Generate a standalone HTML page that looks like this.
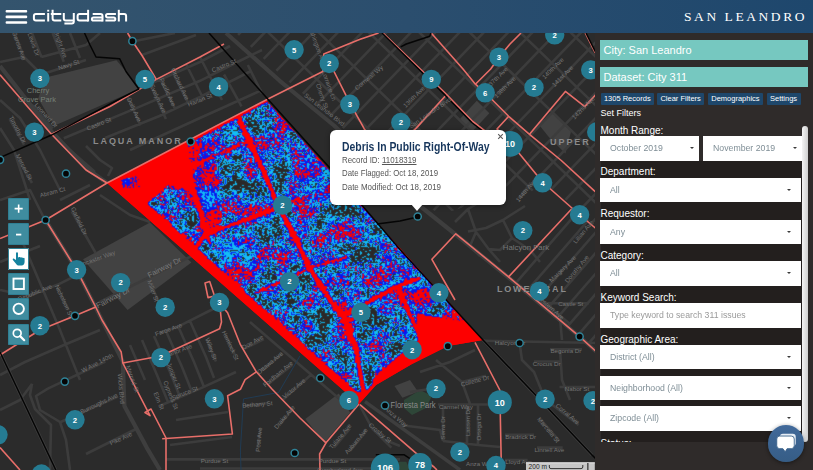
<!DOCTYPE html>
<html><head><meta charset="utf-8"><title>citydash</title>
<style>

html,body{margin:0;padding:0;}
body{width:813px;height:470px;overflow:hidden;background:#2b2b2b;position:relative;font-family:"Liberation Sans",sans-serif;}
#map{position:absolute;left:0;top:0;width:813px;height:470px;}
#hdr{position:absolute;left:0;top:0;width:813px;height:33px;background:linear-gradient(90deg,#34546d 0%,#2b4e6e 50%,#1e476d 100%);}
#brand{position:absolute;left:684px;top:9.3px;color:#fff;font-family:"Liberation Serif",serif;font-size:13.5px;letter-spacing:2.56px;line-height:15px;white-space:nowrap;}
#side{position:absolute;left:595px;top:33px;width:218px;height:437px;background:#2f2b2a;}
.bar{position:absolute;left:5px;width:208px;height:20px;background:#76c8c0;color:#fff;font-size:11px;line-height:20px;text-indent:3.5px;white-space:nowrap;}
.btn{position:absolute;top:60px;height:11.6px;background:#1e476b;color:#fff;font-size:7.5px;line-height:11.6px;text-align:center;white-space:nowrap;border-radius:1px;}
.lbl{position:absolute;left:5.5px;color:#fff;font-size:10px;line-height:10px;white-space:nowrap;}
.sel{position:absolute;left:5.2px;width:201.3px;height:24.7px;background:#fff;color:#7f8e96;font-size:9.1px;line-height:24.7px;text-indent:9.5px;white-space:nowrap;}
.sel i{position:absolute;right:10px;top:11.2px;width:0;height:0;border-left:2.3px solid transparent;border-right:2.3px solid transparent;border-top:2.8px solid #3a3a3a;}
.sel.m i{right:5.2px;}
.sx{display:inline-block;transform:scaleX(0.96);transform-origin:0 50%;text-indent:0;}
.gap{position:absolute;left:5.5px;width:201px;background:#231f1e;}
#pop{position:absolute;left:330px;top:130px;width:175.5px;height:74.5px;background:#fff;border-radius:6px;box-shadow:0 1px 5px rgba(0,0,0,.4);}
#pop:after{content:"";position:absolute;left:81px;top:74px;border-left:6.5px solid transparent;border-right:6.5px solid transparent;border-top:7.5px solid #fff;}
#pop .t{position:absolute;left:12px;top:11px;font-weight:bold;font-size:12px;line-height:12px;color:#17365c;white-space:nowrap;}
#pop .r{position:absolute;left:12px;font-size:8.4px;line-height:9px;color:#555;white-space:nowrap;}
.tb{position:absolute;left:7.7px;width:21.4px;height:21.6px;background:#3f8c9f;border-radius:1.5px;}

</style></head><body>
<svg id="map" width="813" height="470" viewBox="0 0 813 470">
<defs>
<clipPath id="hp"><polygon points="107.0,183.0 266.0,100.0 483.0,340.0 448.0,346.0 412.0,364.0 376.0,385.0 359.0,404.0"/></clipPath>
<clipPath id="rA"><polygon points="0,33 209,33 266,100 107,183 86,170 0,75"/></clipPath>
<clipPath id="rB"><polygon points="236,33 600,33 600,228 575,207 543,183 520,200 500,180 470,205 440,215 420,200 334,120 282,76"/></clipPath>
<clipPath id="rB2"><polygon points="508,277 573,207 600,228 600,352 580,337"/></clipPath>
<clipPath id="rC"><polygon points="0,75 107,183 359,404 326,443 320,470 0,470"/></clipPath>
<clipPath id="rD"><polygon points="359,404 376,385 412,364 448,346 483,340 600,463 600,470 320,470 326,443"/></clipPath>
<filter id="heat" filterUnits="userSpaceOnUse" x="100" y="95" width="390" height="315" color-interpolation-filters="sRGB">
  <feGaussianBlur in="SourceGraphic" stdDeviation="1.5" result="m"/>
  <feTurbulence type="fractalNoise" baseFrequency="0.045" numOctaves="3" seed="11" result="n1"/>
  <feColorMatrix in="n1" type="matrix" values="2.2 0 0 0 -0.6  2.2 0 0 0 -0.6  2.2 0 0 0 -0.6  0 0 0 0 1" result="g1"/>
  <feTurbulence type="fractalNoise" baseFrequency="0.4 0.5" numOctaves="1" seed="3" result="n2"/>
  <feColorMatrix in="n2" type="matrix" values="2.4 0 0 0 -0.7  2.4 0 0 0 -0.7  2.4 0 0 0 -0.7  0 0 0 0 1" result="g2"/>
  <feComposite in="g1" in2="g2" operator="arithmetic" k1="0" k2="0.5" k3="0.5" k4="0" result="s"/>
  <feComposite in="s" in2="m" operator="arithmetic" k1="1" k2="0" k3="0" k4="0" result="v"/>
  <feComponentTransfer in="v" result="c">
    <feFuncR type="discrete" tableValues="0.996 0.996 0.996 0.996 0.996 0.996 0.996 0.996 0.996 0.996 0.996 0.031 0.031 0.031 0.031 0.031 0.031 0.031 0.078 0.078 0.078 0.078 0.078 0.078 0.078 0.165 0.165 0.165 0.165 0.165 0.165 0.165 0.165 0.165 0.165 0.165 0.165 0.165 0.165 0.165"/>
    <feFuncG type="discrete" tableValues="0.000 0.000 0.000 0.000 0.000 0.000 0.000 0.000 0.000 0.000 0.000 0.094 0.094 0.094 0.094 0.094 0.094 0.094 0.745 0.745 0.745 0.745 0.745 0.745 0.745 0.157 0.157 0.157 0.157 0.157 0.157 0.157 0.157 0.157 0.157 0.157 0.157 0.157 0.157 0.157"/>
    <feFuncB type="discrete" tableValues="0.000 0.000 0.000 0.000 0.000 0.000 0.000 0.000 0.000 0.000 0.000 0.941 0.941 0.941 0.941 0.941 0.941 0.941 0.961 0.961 0.961 0.961 0.961 0.961 0.961 0.157 0.157 0.157 0.157 0.157 0.157 0.157 0.157 0.157 0.157 0.157 0.157 0.157 0.157 0.157"/>
  </feComponentTransfer>
  <feConvolveMatrix in="c" order="3" kernelMatrix="0.035 0.09 0.035 0.09 0.5 0.09 0.035 0.09 0.035" divisor="1" edgeMode="duplicate" preserveAlpha="true"/>
</filter>
</defs>
<rect x="0" y="0" width="813" height="470" fill="#2b2b2b"/>
<polygon points="44.7,77.8 116.4,60.3 126.0,71.5 138.8,89.0 54.2,125.7 38.3,98.6" fill="#424242"/>
<polygon points="305.3,418.9 338.8,393.4 350.0,412.5 324.4,442.8" fill="#424242"/>
<polygon points="83.0,259.3 150.0,222.6 191.4,262.5 127.6,310.0" fill="#424242"/>
<polygon points="394.5,386.0 410.0,380.0 418.0,391.8 402.4,397.7" fill="#424242"/>
<polygon points="537.8,123.2 553.0,113.5 571.0,131.5 565.4,153.6 548.8,137.0" fill="#424242"/>
<polygon points="476.8,100.8 489.3,113.2 471.3,132.6 460.2,118.8" fill="#424242"/>
<polygon points="404.0,400.0 420.0,390.0 432.0,396.0 426.0,408.0 412.0,415.0 404.0,408.0" fill="#2e4638"/>
<polygon points="398.4,461.7 406.3,461.7 410.0,470.0 398.4,470.0" fill="#2e4638"/>
<g stroke="#3c3c3c" fill="none">
<path clip-path="url(#rB)" d="M-1196.0,235.2 L193.3,-1203.5 M-1183.4,247.3 L205.9,-1191.4 M-1170.9,259.5 L218.5,-1179.2 M-1158.3,271.6 L231.0,-1167.0 M-1145.7,283.8 L243.6,-1154.9 M-1133.1,295.9 L256.2,-1142.7 M-1120.5,308.1 L268.8,-1130.6 M-1107.9,320.3 L281.4,-1118.4 M-1095.3,332.4 L294.0,-1106.3 M-1082.7,344.6 L306.6,-1094.1 M-1070.2,356.7 L319.2,-1082.0 M-1057.6,368.9 L331.8,-1069.8 M-1045.0,381.0 L344.3,-1057.6 M-1032.4,393.2 L356.9,-1045.5 M-1019.8,405.4 L369.5,-1033.3 M-1007.2,417.5 L382.1,-1021.2 M-994.6,429.7 L394.7,-1009.0 M-982.0,441.8 L407.3,-996.9 M-969.4,454.0 L419.9,-984.7 M-956.9,466.1 L432.5,-972.5 M-944.3,478.3 L445.0,-960.4 M-931.7,490.4 L457.6,-948.2 M-919.1,502.6 L470.2,-936.1 M-906.5,514.8 L482.8,-923.9 M-893.9,526.9 L495.4,-911.8 M-881.3,539.1 L508.0,-899.6 M-868.7,551.2 L520.6,-887.4 M-856.2,563.4 L533.2,-875.3 M-843.6,575.5 L545.8,-863.1 M-831.0,587.7 L558.3,-851.0 M-818.4,599.9 L570.9,-838.8 M-805.8,612.0 L583.5,-826.7 M-793.2,624.2 L596.1,-814.5 M-780.6,636.3 L608.7,-802.4 M-768.0,648.5 L621.3,-790.2 M-755.4,660.6 L633.9,-778.0 M-742.9,672.8 L646.5,-765.9 M-730.3,685.0 L659.1,-753.7 M-717.7,697.1 L671.6,-741.6 M-705.1,709.3 L684.2,-729.4 M-692.5,721.4 L696.8,-717.3 M-679.9,733.6 L709.4,-705.1 M-667.3,745.7 L722.0,-692.9 M-654.7,757.9 L734.6,-680.8 M-642.1,770.0 L747.2,-668.6 M-629.6,782.2 L759.8,-656.5 M-617.0,794.4 L772.3,-644.3 M-604.4,806.5 L784.9,-632.2 M-591.8,818.7 L797.5,-620.0 M-579.2,830.8 L810.1,-607.8 M-566.6,843.0 L822.7,-595.7 M-554.0,855.1 L835.3,-583.5 M-541.4,867.3 L847.9,-571.4 M-528.9,879.5 L860.5,-559.2 M-516.3,891.6 L873.1,-547.1 M-503.7,903.8 L885.6,-534.9 M-491.1,915.9 L898.2,-522.8 M-478.5,928.1 L910.8,-510.6 M-465.9,940.2 L923.4,-498.4 M-453.3,952.4 L936.0,-486.3 M-440.7,964.6 L948.6,-474.1 M-428.1,976.7 L961.2,-462.0 M-415.6,988.9 L973.8,-449.8 M-403.0,1001.0 L986.4,-437.7 M-390.4,1013.2 L998.9,-425.5 M-377.8,1025.3 L1011.5,-413.3 M-365.2,1037.5 L1024.1,-401.2 M-352.6,1049.6 L1036.7,-389.0 M-340.0,1061.8 L1049.3,-376.9 M-327.4,1074.0 L1061.9,-364.7 M-314.8,1086.1 L1074.5,-352.6 M-302.3,1098.3 L1087.1,-340.4 M-289.7,1110.4 L1099.6,-328.2 M-277.1,1122.6 L1112.2,-316.1 M-264.5,1134.7 L1124.8,-303.9 M-251.9,1146.9 L1137.4,-291.8 M-239.3,1159.1 L1150.0,-279.6 M-226.7,1171.2 L1162.6,-267.5 M-214.1,1183.4 L1175.2,-255.3 M-201.6,1195.5 L1187.8,-243.2 M-189.0,1207.7 L1200.4,-231.0 M-176.4,1219.8 L1212.9,-218.8 M-163.8,1232.0 L1225.5,-206.7 M-151.2,1244.2 L1238.1,-194.5 M-138.6,1256.3 L1250.7,-182.4 M-126.0,1268.5 L1263.3,-170.2 M-113.4,1280.6 L1275.9,-158.1 M-100.8,1292.8 L1288.5,-145.9 M-88.3,1304.9 L1301.1,-133.7 M-75.7,1317.1 L1313.7,-121.6 M-63.1,1329.2 L1326.2,-109.4 M-50.5,1341.4 L1338.8,-97.3 M-37.9,1353.6 L1351.4,-85.1 M-25.3,1365.7 L1364.0,-73.0 M-12.7,1377.9 L1376.6,-60.8 M-0.1,1390.0 L1389.2,-48.6 M12.5,1402.2 L1401.8,-36.5 M25.0,1414.3 L1414.4,-24.3 M37.6,1426.5 L1426.9,-12.2 M50.2,1438.7 L1439.5,-0.0 M62.8,1450.8 L1452.1,12.1 M75.4,1463.0 L1464.7,24.3 M88.0,1475.1 L1477.3,36.4 M100.6,1487.3 L1489.9,48.6 M113.2,1499.4 L1502.5,60.8 M125.7,1511.6 L1515.1,72.9 M138.3,1523.8 L1527.7,85.1 M150.9,1535.9 L1540.2,97.2 M163.5,1548.1 L1552.8,109.4 M176.1,1560.2 L1565.4,121.5 M188.7,1572.4 L1578.0,133.7 M201.3,1584.5 L1590.6,145.9 M213.9,1596.7 L1603.2,158.0 M226.5,1608.8 L1615.8,170.2 M239.0,1621.0 L1628.4,182.3 M251.6,1633.2 L1640.9,194.5 M264.2,1645.3 L1653.5,206.6 M276.8,1657.5 L1666.1,218.8 M289.4,1669.6 L1678.7,231.0 M302.0,1681.8 L1691.3,243.1" stroke-width="2.6"/>
<path clip-path="url(#rB)" d="M-241.4,-1189.6 L1197.3,199.8 M-265.7,-1164.4 L1173.0,224.9 M-290.0,-1139.2 L1148.6,250.1 M-314.4,-1114.0 L1124.3,275.3 M-338.7,-1088.9 L1100.0,300.5 M-363.0,-1063.7 L1075.7,325.6 M-387.3,-1038.5 L1051.4,350.8 M-411.6,-1013.3 L1027.1,376.0 M-435.9,-988.1 L1002.8,401.2 M-460.2,-963.0 L978.4,426.3 M-484.5,-937.8 L954.1,451.5 M-508.9,-912.6 L929.8,476.7 M-533.2,-887.4 L905.5,501.9 M-557.5,-862.3 L881.2,527.1 M-581.8,-837.1 L856.9,552.2 M-606.1,-811.9 L832.6,577.4 M-630.4,-786.7 L808.3,602.6 M-654.7,-761.6 L783.9,627.8 M-679.0,-736.4 L759.6,652.9 M-703.4,-711.2 L735.3,678.1 M-727.7,-686.0 L711.0,703.3 M-752.0,-660.8 L686.7,728.5 M-776.3,-635.7 L662.4,753.6 M-800.6,-610.5 L638.1,778.8 M-824.9,-585.3 L613.8,804.0 M-849.2,-560.1 L589.4,829.2 M-873.6,-535.0 L565.1,854.4 M-897.9,-509.8 L540.8,879.5 M-922.2,-484.6 L516.5,904.7 M-946.5,-459.4 L492.2,929.9 M-970.8,-434.3 L467.9,955.1 M-995.1,-409.1 L443.6,980.2 M-1019.4,-383.9 L419.2,1005.4 M-1043.7,-358.7 L394.9,1030.6 M-1068.1,-333.5 L370.6,1055.8 M-1092.4,-308.4 L346.3,1080.9 M-1116.7,-283.2 L322.0,1106.1 M-1141.0,-258.0 L297.7,1131.3 M-1165.3,-232.8 L273.4,1156.5 M-1189.6,-207.7 L249.1,1181.7 M-1213.9,-182.5 L224.7,1206.8 M-1238.2,-157.3 L200.4,1232.0 M-1262.6,-132.1 L176.1,1257.2 M-1286.9,-107.0 L151.8,1282.4 M-1311.2,-81.8 L127.5,1307.5 M-1335.5,-56.6 L103.2,1332.7 M-1359.8,-31.4 L78.9,1357.9 M-1384.1,-6.3 L54.6,1383.1 M-1408.4,18.9 L30.2,1408.2 M-1432.8,44.1 L5.9,1433.4 M-1457.1,69.3 L-18.4,1458.6 M-1481.4,94.5 L-42.7,1483.8 M-1505.7,119.6 L-67.0,1509.0 M-1530.0,144.8 L-91.3,1534.1 M-1554.3,170.0 L-115.6,1559.3 M-1578.6,195.2 L-140.0,1584.5 M-1602.9,220.3 L-164.3,1609.7 M-1627.3,245.5 L-188.6,1634.8 M-1651.6,270.7 L-212.9,1660.0 M-1675.9,295.9 L-237.2,1685.2" stroke-width="2.6"/>
<path clip-path="url(#rB2)" d="M-1179.8,299.4 L132.3,-1210.0 M-1169.6,308.3 L142.5,-1201.2 M-1159.5,317.1 L152.7,-1192.3 M-1149.3,326.0 L162.9,-1183.4 M-1139.1,334.8 L173.0,-1174.6 M-1128.9,343.7 L183.2,-1165.7 M-1118.7,352.5 L193.4,-1156.9 M-1108.5,361.4 L203.6,-1148.0 M-1098.3,370.3 L213.8,-1139.2 M-1088.1,379.1 L224.0,-1130.3 M-1077.9,388.0 L234.2,-1121.4 M-1067.8,396.8 L244.4,-1112.6 M-1057.6,405.7 L254.6,-1103.7 M-1047.4,414.5 L264.7,-1094.9 M-1037.2,423.4 L274.9,-1086.0 M-1027.0,432.3 L285.1,-1077.2 M-1016.8,441.1 L295.3,-1068.3 M-1006.6,450.0 L305.5,-1059.4 M-996.4,458.8 L315.7,-1050.6 M-986.2,467.7 L325.9,-1041.7 M-976.1,476.5 L336.1,-1032.9 M-965.9,485.4 L346.3,-1024.0 M-955.7,494.3 L356.4,-1015.2 M-945.5,503.1 L366.6,-1006.3 M-935.3,512.0 L376.8,-997.5 M-925.1,520.8 L387.0,-988.6 M-914.9,529.7 L397.2,-979.7 M-904.7,538.5 L407.4,-970.9 M-894.5,547.4 L417.6,-962.0 M-884.4,556.3 L427.8,-953.2 M-874.2,565.1 L437.9,-944.3 M-864.0,574.0 L448.1,-935.5 M-853.8,582.8 L458.3,-926.6 M-843.6,591.7 L468.5,-917.7 M-833.4,600.5 L478.7,-908.9 M-823.2,609.4 L488.9,-900.0 M-813.0,618.2 L499.1,-891.2 M-802.9,627.1 L509.3,-882.3 M-792.7,636.0 L519.5,-873.5 M-782.5,644.8 L529.6,-864.6 M-772.3,653.7 L539.8,-855.7 M-762.1,662.5 L550.0,-846.9 M-751.9,671.4 L560.2,-838.0 M-741.7,680.2 L570.4,-829.2 M-731.5,689.1 L580.6,-820.3 M-721.3,698.0 L590.8,-811.5 M-711.2,706.8 L601.0,-802.6 M-701.0,715.7 L611.2,-793.7 M-690.8,724.5 L621.3,-784.9 M-680.6,733.4 L631.5,-776.0 M-670.4,742.2 L641.7,-767.2 M-660.2,751.1 L651.9,-758.3 M-650.0,760.0 L662.1,-749.5 M-639.8,768.8 L672.3,-740.6 M-629.6,777.7 L682.5,-731.7 M-619.5,786.5 L692.7,-722.9 M-609.3,795.4 L702.9,-714.0 M-599.1,804.2 L713.0,-705.2 M-588.9,813.1 L723.2,-696.3 M-578.7,822.0 L733.4,-687.5 M-568.5,830.8 L743.6,-678.6 M-558.3,839.7 L753.8,-669.7 M-548.1,848.5 L764.0,-660.9 M-537.9,857.4 L774.2,-652.0 M-527.8,866.2 L784.4,-643.2 M-517.6,875.1 L794.5,-634.3 M-507.4,884.0 L804.7,-625.5 M-497.2,892.8 L814.9,-616.6 M-487.0,901.7 L825.1,-607.8 M-476.8,910.5 L835.3,-598.9 M-466.6,919.4 L845.5,-590.0 M-456.4,928.2 L855.7,-581.2 M-446.2,937.1 L865.9,-572.3 M-436.1,946.0 L876.1,-563.5 M-425.9,954.8 L886.2,-554.6 M-415.7,963.7 L896.4,-545.8 M-405.5,972.5 L906.6,-536.9 M-395.3,981.4 L916.8,-528.0 M-385.1,990.2 L927.0,-519.2 M-374.9,999.1 L937.2,-510.3 M-364.7,1007.9 L947.4,-501.5 M-354.6,1016.8 L957.6,-492.6 M-344.4,1025.7 L967.8,-483.8 M-334.2,1034.5 L977.9,-474.9 M-324.0,1043.4 L988.1,-466.0 M-313.8,1052.2 L998.3,-457.2 M-303.6,1061.1 L1008.5,-448.3 M-293.4,1069.9 L1018.7,-439.5 M-283.2,1078.8 L1028.9,-430.6 M-273.0,1087.7 L1039.1,-421.8 M-262.9,1096.5 L1049.3,-412.9 M-252.7,1105.4 L1059.5,-404.0 M-242.5,1114.2 L1069.6,-395.2 M-232.3,1123.1 L1079.8,-386.3 M-222.1,1131.9 L1090.0,-377.5 M-211.9,1140.8 L1100.2,-368.6 M-201.7,1149.7 L1110.4,-359.8 M-191.5,1158.5 L1120.6,-350.9 M-181.3,1167.4 L1130.8,-342.0 M-171.2,1176.2 L1141.0,-333.2 M-161.0,1185.1 L1151.1,-324.3 M-150.8,1193.9 L1161.3,-315.5 M-140.6,1202.8 L1171.5,-306.6 M-130.4,1211.7 L1181.7,-297.8 M-120.2,1220.5 L1191.9,-288.9 M-110.0,1229.4 L1202.1,-280.1 M-99.8,1238.2 L1212.3,-271.2 M-89.6,1247.1 L1222.5,-262.3 M-79.5,1255.9 L1232.7,-253.5 M-69.3,1264.8 L1242.8,-244.6 M-59.1,1273.7 L1253.0,-235.8 M-48.9,1282.5 L1263.2,-226.9 M-38.7,1291.4 L1273.4,-218.1 M-28.5,1300.2 L1283.6,-209.2 M-18.3,1309.1 L1293.8,-200.3 M-8.1,1317.9 L1304.0,-191.5 M2.0,1326.8 L1314.2,-182.6 M12.2,1335.6 L1324.4,-173.8 M22.4,1344.5 L1334.5,-164.9 M32.6,1353.4 L1344.7,-156.1 M42.8,1362.2 L1354.9,-147.2 M53.0,1371.1 L1365.1,-138.3 M63.2,1379.9 L1375.3,-129.5 M73.4,1388.8 L1385.5,-120.6 M83.6,1397.6 L1395.7,-111.8 M93.7,1406.5 L1405.9,-102.9 M103.9,1415.4 L1416.1,-94.1 M114.1,1424.2 L1426.2,-85.2 M124.3,1433.1 L1436.4,-76.3 M134.5,1441.9 L1446.6,-67.5 M144.7,1450.8 L1456.8,-58.6 M154.9,1459.6 L1467.0,-49.8 M165.1,1468.5 L1477.2,-40.9 M175.3,1477.4 L1487.4,-32.1 M185.4,1486.2 L1497.6,-23.2 M195.6,1495.1 L1507.7,-14.3 M205.8,1503.9 L1517.9,-5.5 M216.0,1512.8 L1528.1,3.4 M226.2,1521.6 L1538.3,12.2 M236.4,1530.5 L1548.5,21.1 M246.6,1539.4 L1558.7,29.9 M256.8,1548.2 L1568.9,38.8 M267.0,1557.1 L1579.1,47.7 M277.1,1565.9 L1589.3,56.5 M287.3,1574.8 L1599.4,65.4 M297.5,1583.6 L1609.6,74.2 M307.7,1592.5 L1619.8,83.1 M317.9,1601.4 L1630.0,91.9 M328.1,1610.2 L1640.2,100.8 M338.3,1619.1 L1650.4,109.6 M348.5,1627.9 L1660.6,118.5 M358.6,1636.8 L1670.8,127.4 M368.8,1645.6 L1681.0,136.2 M379.0,1654.5 L1691.1,145.1 M389.2,1663.4 L1701.3,153.9 M399.4,1672.2 L1711.5,162.8" stroke-width="2.6"/>
<path d="M14.4,33.0 L24.0,57.0 M32.0,33.0 L41.5,57.0 M52.6,33.0 L63.8,61.7 M70.0,33.0 L80.0,58.0 M0.0,62.0 L24.0,57.0 L41.5,74.5 L86.0,60.0 M41.5,57.0 L86.0,45.0 L100.0,33.0 M127.6,96.8 L140.4,125.5 M150.0,84.0 L165.9,119.0 M159.5,77.7 L175.4,109.6 M172.2,71.3 L188.2,103.2 M186.0,64.0 L204.0,100.0 M200.0,57.0 L222.0,100.0 M224.0,74.5 L241.5,106.4 M247.8,65.0 L262.0,93.6 M63.8,138.3 L140.4,106.4 L200.0,80.8 L241.5,60.0 L262.0,50.0 M105.0,138.0 L159.5,116.0 L200.0,96.8 L251.0,71.0 M130.0,150.0 L200.0,118.0 L262.0,90.0 M150.0,84.0 L200.0,62.0 L230.0,46.0 M32.0,104.8 L52.6,128.7 M9.6,119.0 L24.0,144.6 M19.0,160.6 L32.0,183.0 M0.0,128.0 L14.0,150.0 L30.0,200.0 M0.0,100.0 L20.0,118.0 L40.0,150.0 L60.0,190.0 M86.0,146.0 L100.0,160.0 L112.0,168.0 L108.0,176.0 M70.0,150.0 L95.0,172.0 M135.0,41.0 L175.0,33.0 M142.0,55.0 L196.0,35.0 M98.9,302.4 L178.6,262.5 L200.0,252.0 M71.8,211.5 L95.7,253.0 M86.0,262.5 L108.5,254.5 M57.4,288.0 L68.6,310.0 M28.7,296.0 L57.4,284.8 L83.0,272.0 M150.0,281.6 L159.5,304.0 M47.8,388.6 L105.3,361.5 M60.6,422.0 L118.0,396.6 M86.0,454.0 L137.0,428.5 M159.5,332.8 L178.6,326.4 L215.0,308.0 M32.0,383.8 L30.0,395.0 L35.0,409.0 L51.0,425.0 L50.0,470.0 M47.8,388.6 L36.0,396.0 L40.0,410.0 L60.0,422.0 L66.0,440.0 L70.0,470.0 M159.5,406.0 L200.0,388.6 L236.0,372.0 M130.0,345.0 L145.0,380.0 M142.0,340.0 L157.0,375.0 L168.0,402.0 M154.0,336.0 L170.0,372.0 L180.0,397.0 M166.0,331.0 L182.0,367.0 L192.0,392.0 M178.0,326.0 L194.0,362.0 L204.0,387.0 M190.0,321.0 L206.0,357.0 L214.0,378.0 M225.5,336.0 L235.0,355.0 M206.4,339.0 L216.0,361.5 M244.7,348.7 L263.8,339.0 M260.6,371.0 L283.0,353.5 M268.6,383.8 L292.5,364.7 M283.0,399.7 L311.6,374.2 M250.0,322.0 L273.4,342.3 L340.4,399.7 M244.7,406.0 L268.6,403.0 M279.7,425.0 L292.5,409.0 M257.4,447.6 L260.6,428.5 M166.0,459.4 L400.0,459.4 M200.0,468.5 L400.0,468.5 M170.0,445.0 L232.0,437.0 M176.0,420.0 L228.0,412.0 M0.0,200.0 L30.0,190.0 L45.0,220.0 M0.0,262.0 L40.0,246.0 M0.0,290.0 L28.7,296.0 M20.0,236.0 L60.0,330.0 L80.0,380.0 M0.0,375.0 L25.0,362.0 L64.0,345.0 M64.0,345.0 L100.0,330.0 M0.0,410.0 L20.0,400.0 L32.0,384.0 M100.0,195.0 L130.0,215.0 L150.0,222.0 M60.0,200.0 L90.0,185.0 M468.0,209.0 L476.0,232.0 L488.6,249.0 L500.0,262.0 M468.0,231.5 L486.0,228.0 L503.0,220.0 L525.0,206.0 M455.0,222.0 L468.0,209.0 L490.0,196.0 M476.0,232.0 L470.0,246.0 L480.0,256.0 M503.0,220.0 L512.0,238.0 L500.0,250.0 L488.6,249.0 M512.0,238.0 L530.0,250.0 L540.0,262.0 M521.0,195.5 L530.8,182.8 M547.7,303.3 L589.0,303.3 M543.0,301.7 L570.0,324.0 M560.0,318.0 L562.0,340.0 M334.0,447.6 L350.0,428.5 M350.0,450.8 L365.9,431.6 M372.2,428.5 L391.4,447.6 M359.0,404.0 L372.2,428.5 L385.0,440.0 L400.0,446.0 M483.0,340.7 L600.0,343.0 M550.0,349.3 L582.0,349.3 M534.0,361.5 L559.5,361.5 M559.5,387.0 L600.0,387.0 M550.0,403.0 L578.6,425.0 M540.4,419.0 L559.5,441.0 M505.0,434.8 L534.0,434.8 M537.0,447.6 L562.7,447.6 M505.0,460.0 L527.6,460.0 M462.0,382.0 L486.0,375.8 M438.0,404.5 L495.7,404.5 M443.0,405.0 L443.0,441.0 M467.0,405.0 L467.0,445.0 M478.0,405.0 L478.0,445.0 M443.0,441.0 L478.0,445.0 L500.0,447.0 M436.0,360.0 L462.0,382.0 L470.0,404.0 M519.6,343.0 L522.0,360.0 L534.0,372.0 L545.0,399.0 M560.0,349.0 L562.0,380.0 L570.0,400.0 M400.0,425.0 L440.0,430.0 L443.0,441.0 M410.0,392.0 L436.0,388.0 M420.0,372.0 L450.0,362.0 L475.0,350.0" stroke-width="2.6" stroke-linejoin="round"/>
</g>
<g stroke="#3e3e3e" fill="none" stroke-width="4.2" stroke-linejoin="round">
<path d="M226,33 L279.7,80.8 L334,125.5 L420,206 L455,234 L508,277 L580,337 L600,355"/>
<path d="M0,66 L51,131 L86,168 L107,183"/>
<path d="M102,320 L122.8,361.5 L124.4,406 L146.7,447.6 L160,470"/>
<path d="M45.6,220 L76.6,269.8 L102,320"/>
<path d="M0,352 L55.8,470" stroke-width="3"/>
<path d="M483,340 L537,396.6 L592,455" stroke-width="3"/>
<path d="M365,401.6 L460,470" stroke-width="3.4"/>
</g>
<g clip-path="url(#hp)">
<rect x="100" y="95" width="390" height="315" fill="#fe0000"/>
<g filter="url(#heat)">
<rect x="90" y="85" width="410" height="335" fill="#000"/>
<polygon points="107.0,183.0 266.0,100.0 483.0,340.0 448.0,346.0 412.0,364.0 376.0,385.0 359.0,404.0" fill="#fff"/>
<polyline points="239.6,120.0 264.0,172.0 278.7,207.3 292.0,231.0 309.0,267.0 332.0,303.0 343.0,316.0 356.0,348.0 364.0,394.0" fill="none" stroke="#000" stroke-width="4.6" stroke-linecap="round" stroke-linejoin="round"/>
<polyline points="183.4,150.0 196.0,200.0 205.5,231.0 210.0,244.0" fill="none" stroke="#000" stroke-width="3.8" stroke-linecap="round" stroke-linejoin="round"/>
<polyline points="196.0,248.0 205.5,234.6 240.0,222.0 278.7,207.3" fill="none" stroke="#000" stroke-width="3.6" stroke-linecap="round" stroke-linejoin="round"/>
<polyline points="278.7,207.3 300.0,198.0" fill="none" stroke="#000" stroke-width="2.2" stroke-linecap="round" stroke-linejoin="round"/>
<polyline points="186.8,168.0 240.0,145.0" fill="none" stroke="#000" stroke-width="2.4" stroke-linecap="round" stroke-linejoin="round"/>
<polyline points="255.0,293.0 306.0,270.0" fill="none" stroke="#000" stroke-width="3.0" stroke-linecap="round" stroke-linejoin="round"/>
<polyline points="308.0,268.0 347.0,257.0" fill="none" stroke="#000" stroke-width="2.6" stroke-linecap="round" stroke-linejoin="round"/>
<polyline points="343.0,316.0 398.0,286.0 420.0,278.0" fill="none" stroke="#000" stroke-width="3.8" stroke-linecap="round" stroke-linejoin="round"/>
<polyline points="398.0,287.0 420.0,338.0" fill="none" stroke="#000" stroke-width="3.8" stroke-linecap="round" stroke-linejoin="round"/>
<polyline points="107.0,183.0 266.0,100.0" fill="none" stroke="#000" stroke-width="5.0" stroke-linecap="round" stroke-linejoin="round"/>
<polyline points="359.0,404.0 376.0,385.0 412.0,364.0 448.0,346.0 483.0,340.0" fill="none" stroke="#000" stroke-width="6.0" stroke-linecap="round" stroke-linejoin="round"/>
<polygon points="100.0,176.0 107.0,183.0 359.0,404.0 366.0,398.0 352.0,388.0 148.0,204.0 120.0,180.0" fill="#000"/>
<polygon points="100.0,183.0 185.0,141.0 190.0,165.0 192.0,191.0 168.0,185.0 146.0,205.0 120.0,200.0" fill="#000"/>
<polygon points="416.0,314.0 466.0,322.0 490.0,345.0 448.0,350.0 412.0,368.0 376.0,390.0 372.0,380.0 420.0,338.0" fill="#000"/>
<polygon points="184.0,148.0 214.0,136.0 222.0,230.0 206.0,236.0" fill="#000" fill-opacity="0.38"/>
<polygon points="296.0,150.0 330.0,170.0 336.0,205.0 306.0,200.0" fill="#000" fill-opacity="0.25"/>
<polygon points="400.0,262.0 440.0,300.0 420.0,316.0 404.0,290.0" fill="#000" fill-opacity="0.30"/>
<polygon points="210.0,250.0 250.0,236.0 262.0,290.0 232.0,268.0" fill="#000" fill-opacity="0.20"/>
<polygon points="117,181 139,173 142,188 126,192" fill="#989898"/>
</g></g>
<path d="M300,355.8 L278.6,392.5 L243.5,398.9 L240.4,450 L241,470" fill="none" stroke="#1f3d58" stroke-width="0.9"/>
<g fill="none" stroke="#e86e69" stroke-width="1.6" stroke-linejoin="round">
<polyline points="127.6,33.0 132.4,41.2 142.0,55.5 156.3,79.4"/>
<polyline points="156.3,79.4 200.0,57.0 224.0,44.0"/>
<polyline points="156.3,79.4 110.0,106.5 51.0,134.5"/>
<polyline points="0.0,74.7 51.0,133.7 86.0,170.0 107.0,183.0"/>
<polyline points="0.0,238.6 45.6,220.0 107.0,183.0 266.0,100.0 322.8,71.5 323.8,54.0 359.5,39.6 378.6,33.0"/>
<polyline points="329.2,63.5 334.0,71.5 350.0,103.4 364.3,128.9 380.0,150.0"/>
<polyline points="383.0,33.0 431.2,79.5 446.4,94.4 472.7,121.5 485.0,131.0 500.0,146.0"/>
<polyline points="446.4,94.8 416.0,128.4 412.0,132.0"/>
<polyline points="431.2,33.0 463.0,69.0 475.4,84.2 485.2,92.8 508.7,116.3 529.5,134.3 561.3,160.5 593.0,189.6 600.0,196.0"/>
<polyline points="508.7,116.3 497.0,129.0 511.5,144.0 542.5,182.0 579.3,214.5 600.0,232.0"/>
<polyline points="475.4,84.2 490.7,69.0 499.0,57.3 510.0,44.0 521.0,33.0"/>
<polyline points="529.5,134.3 565.4,91.4 584.8,106.6 600.0,90.0"/>
<polyline points="571.6,209.0 508.5,276.9 455.8,233.8 431.9,259.3 455.0,300.0"/>
<polyline points="508.5,276.9 579.6,336.6 600.0,355.0"/>
<polyline points="475.0,342.3 499.8,390.0 501.4,470.0"/>
<polyline points="360.0,404.6 418.0,454.8 434.0,467.0 437.0,470.0"/>
<polyline points="219.6,303.2 227.6,312.8 240.4,344.7 256.3,371.8 272.2,389.3 300.0,418.0 326.0,442.8 359.0,404.0"/>
<polyline points="219.6,303.2 214.5,296.0 209.7,281.6 205.0,283.0 208.0,297.6 214.5,296.0"/>
<polyline points="326.0,442.8 319.6,454.0 320.0,470.0"/>
<polyline points="256.3,371.8 245.1,379.7 240.4,389.3 227.6,395.7 232.4,434.0 162.2,438.8"/>
<polyline points="45.6,220.0 76.6,269.8 95.7,307.0 102.0,320.0 121.2,352.0 122.8,363.0 150.0,415.7 145.0,412.5 151.0,409.0 166.0,438.0 166.0,470.0"/>
<polyline points="95.7,307.0 75.0,315.8 39.9,330.0 0.0,355.0"/>
<polyline points="122.8,363.0 160.6,356.0 219.6,328.7 221.5,322.0 219.6,303.2"/>
<polyline points="0.0,447.6 20.0,470.0"/>
<polyline points="585.3,33.0 595.3,53.0"/>
</g>
<g fill="none" stroke="#050505" stroke-width="1.5" stroke-linejoin="round">
<polyline points="84.5,33.0 90.0,45.0 96.0,57.0 119.6,58.7 126.0,71.5 138.8,89.0 110.0,104.0 51.0,135.3 0.0,157.6"/>
<polyline points="209.0,33.0 268.6,100.0 330.8,169.0 400.0,249.6 483.0,340.0 537.0,396.6 592.0,455.0 600.0,463.0"/>
<polyline points="400.7,46.8 406.3,44.0 429.8,36.3 431.0,33.0"/>
<polyline points="382.0,33.0 430.2,80.5 445.4,95.4 471.7,122.5 484.0,132.0 499.0,147.0"/>
<polyline points="0.0,352.0 55.8,470.0"/>
<polyline points="377.0,224.0 400.0,221.0 417.5,217.0"/>
<polyline points="586.0,33.0 596.0,53.0"/>
<polyline points="375.8,454.8 404.3,454.8 410.0,458.7"/>
</g>
<g font-family="Liberation Sans, sans-serif" fill="#8a8a8a">
<text x="93" y="144" font-size="9" font-weight="bold" letter-spacing="1.95">LAQUA MANOR</text>
<text x="550" y="145" font-size="9" font-weight="bold" letter-spacing="1.95">UPPER B</text>
<text x="497" y="291.5" font-size="9" font-weight="bold" letter-spacing="1.8">LOWER BAL</text>
<text x="526" y="250" font-size="7.8" text-anchor="middle" fill="#777">Halcyon Park</text>
<text x="38" y="93.4" font-size="7.5" text-anchor="middle" fill="#768076">Cherry</text>
<text x="37" y="101.6" font-size="7.5" text-anchor="middle" fill="#768076">Grove Park</text>
<text x="390.6" y="407.6" font-size="8.2" fill="#8a8a8a" textLength="45" lengthAdjust="spacingAndGlyphs">Floresta Park</text>
</g>
<g font-family="Liberation Sans, sans-serif" font-size="6.2" fill="#747474" text-anchor="middle">
<text transform="translate(68.6 65.0) rotate(-18)" y="2">Navy St</text>
<text transform="translate(46.0 115.5) rotate(48)" y="2">Leonard Dr</text>
<text transform="translate(17.5 129.5) rotate(62)" y="2">Timothy Dr</text>
<text transform="translate(99.0 124.0) rotate(-22)" y="2">Castro St</text>
<text transform="translate(134.0 109.7) rotate(65)" y="2">Dolly Ave</text>
<text transform="translate(158.0 98.6) rotate(65)" y="2">Evelyn Ave</text>
<text transform="translate(167.5 92.0) rotate(65)" y="2">Pacific Ave</text>
<text transform="translate(180.0 84.0) rotate(65)" y="2">Orchard Ave</text>
<text transform="translate(24.0 167.0) rotate(62)" y="2">Merced St</text>
<text transform="translate(200.0 100.0) rotate(-22)" y="2">Harlan St</text>
<text transform="translate(19.0 46.0) rotate(70)" y="2">Garcia Ave</text>
<text transform="translate(33.5 44.4) rotate(70)" y="2">Lewis Dr</text>
<text transform="translate(60.6 44.4) rotate(70)" y="2">Bright Ave</text>
<text transform="translate(224.0 65.7) rotate(-22)" y="2">Castro St</text>
<text transform="translate(324.4 109.7) rotate(38)" y="2">San Leandro Blvd</text>
<text transform="translate(329.0 85.8) rotate(70)" y="2">Lorraine Ln</text>
<text transform="translate(322.0 96.0) rotate(70)" y="2">Cherry St</text>
<text transform="translate(369.0 77.8) rotate(-40)" y="2">Cornwall Wy</text>
<text transform="translate(316.4 44.0) rotate(70)" y="2">Washington Ave</text>
<text transform="translate(497.0 77.8) rotate(-45)" y="2">137th Ave</text>
<text transform="translate(505.0 87.4) rotate(-45)" y="2">138th Ave</text>
<text transform="translate(553.0 68.3) rotate(-45)" y="2">140th Ave</text>
<text transform="translate(562.7 76.3) rotate(-45)" y="2">141st Ave</text>
<text transform="translate(583.4 108.0) rotate(-45)" y="2">142nd Ave</text>
<text transform="translate(430.0 113.0) rotate(-35)" y="2">San Leandro Blvd</text>
<text transform="translate(414.0 97.0) rotate(-45)" y="2">136th Ave</text>
<text transform="translate(526.0 190.7) rotate(-50)" y="2">144th Ave</text>
<text transform="translate(583.4 232.0) rotate(-50)" y="2">Lillian Ave</text>
<text transform="translate(562.7 269.0) rotate(-45)" y="2">Margery Ave</text>
<text transform="translate(577.0 269.0) rotate(-50)" y="2">Dorothy Ave</text>
<text transform="translate(570.7 304.4) rotate(0)" y="2">Castle St</text>
<text transform="translate(550.0 307.0) rotate(42)" y="2">Western Ave</text>
<text transform="translate(510.0 342.7) rotate(0)" y="2">Halcyon Dr</text>
<text transform="translate(565.9 351.3) rotate(0)" y="2">Begonia Dr</text>
<text transform="translate(546.7 363.5) rotate(0)" y="2">Crocus Dr</text>
<text transform="translate(577.0 389.0) rotate(0)" y="2">Nabor St</text>
<text transform="translate(475.0 381.0) rotate(-15)" y="2">Collette Dr</text>
<text transform="translate(456.0 406.5) rotate(0)" y="2">Carmel Way</text>
<text transform="translate(567.5 414.0) rotate(40)" y="2">Corral Ave</text>
<text transform="translate(548.3 430.0) rotate(50)" y="2">Marcella St</text>
<text transform="translate(520.6 437.0) rotate(0)" y="2">Bradrick Dr</text>
<text transform="translate(549.3 449.6) rotate(0)" y="2">Linnell Ave</text>
<text transform="translate(518.7 461.7) rotate(0)" y="2">Lloyd Ave</text>
<text transform="translate(443.0 428.0) rotate(-90)" y="2">Serra Dr</text>
<text transform="translate(467.6 422.0) rotate(-90)" y="2">Lassen Dr</text>
<text transform="translate(479.0 427.0) rotate(-90)" y="2">Ortega Dr</text>
<text transform="translate(480.0 464.0) rotate(0)" y="2">Anza Way</text>
<text transform="translate(211.0 348.7) rotate(70)" y="2">Wiley St</text>
<text transform="translate(230.3 345.5) rotate(65)" y="2">Hemlock St</text>
<text transform="translate(252.6 342.3) rotate(-30)" y="2">Doe Ave</text>
<text transform="translate(270.0 363.0) rotate(-40)" y="2">Ottawa Ave</text>
<text transform="translate(278.0 374.0) rotate(-40)" y="2">Fordham Ave</text>
<text transform="translate(294.0 388.6) rotate(-40)" y="2">Victor Ave</text>
<text transform="translate(257.4 404.5) rotate(-5)" y="2">Bethany St</text>
<text transform="translate(284.5 417.3) rotate(-50)" y="2">Drake Ave</text>
<text transform="translate(259.0 439.6) rotate(-85)" y="2">Post Ave</text>
<text transform="translate(214.4 461.4) rotate(0)" y="2">Purdue St</text>
<text transform="translate(332.4 461.4) rotate(0)" y="2">Purdue St</text>
<text transform="translate(340.4 436.4) rotate(-50)" y="2">Tulane Ave</text>
<text transform="translate(356.3 441.0) rotate(-50)" y="2">Auburn Ave</text>
<text transform="translate(380.0 433.0) rotate(40)" y="2">Crosby St</text>
<text transform="translate(340.0 469.5) rotate(0)" y="2">Cumberland Ave</text>
<text transform="translate(396.0 417.0) rotate(40)" y="2">Anza Way</text>
<text transform="translate(97.3 363.0) rotate(-27)" y="2">W Ave 140th</text>
<text transform="translate(98.9 403.6) rotate(-25)" y="2">Burroughs Ave</text>
<text transform="translate(121.0 438.7) rotate(-25)" y="2">Pike Ave</text>
<text transform="translate(121.0 388.6) rotate(85)" y="2">Wicks Blvd</text>
<text transform="translate(132.4 379.0) rotate(70)" y="2">Merced St</text>
<text transform="translate(173.8 375.8) rotate(68)" y="2">Juniper St</text>
<text transform="translate(170.7 395.0) rotate(68)" y="2">Cypress St</text>
<text transform="translate(158.8 401.0) rotate(68)" y="2">Elm St</text>
<text transform="translate(185.0 393.0) rotate(-22)" y="2">Spruce St</text>
<text transform="translate(168.6 329.7) rotate(-20)" y="2">Faroe Ave</text>
<text transform="translate(178.0 351.0) rotate(-20)" y="2">Manor Ave</text>
<text transform="translate(52.6 192.3) rotate(-15)" y="2">Abram Ct</text>
<text transform="translate(79.0 221.0) rotate(65)" y="2">Garfield Dr</text>
<text transform="translate(95.7 259.3) rotate(-20)" y="2">Lancaster Way</text>
<text transform="translate(35.0 292.8) rotate(-22)" y="2">Republic Ave</text>
<text transform="translate(63.8 300.8) rotate(65)" y="2">Nicholson St</text>
<text transform="translate(153.0 291.0) rotate(70)" y="2">Miller St</text>
<text transform="translate(164.3 267.3) rotate(-27)" y="2.6" font-size="7.6" fill="#7d7d7d">Fairway Dr</text>
<text transform="translate(113.0 297.6) rotate(-27)" y="2.6" font-size="7.6" fill="#7d7d7d">Fairway Dr</text>
</g>
<circle cx="132.4" cy="41.2" r="3.6" fill="#050505" stroke="#2f8297" stroke-width="1.5"/>
<circle cx="190.7" cy="141.6" r="3.6" fill="#050505" stroke="#2f8297" stroke-width="1.5"/>
<circle cx="66.0" cy="173.7" r="3.6" fill="#050505" stroke="#2f8297" stroke-width="1.5"/>
<circle cx="0.0" cy="159.8" r="3.6" fill="#050505" stroke="#2f8297" stroke-width="1.5"/>
<circle cx="417.7" cy="216.5" r="3.6" fill="#050505" stroke="#2f8297" stroke-width="1.5"/>
<circle cx="447.8" cy="346.2" r="3.6" fill="#050505" stroke="#2f8297" stroke-width="1.5"/>
<circle cx="519.6" cy="343.0" r="3.6" fill="#050505" stroke="#2f8297" stroke-width="1.5"/>
<circle cx="579.6" cy="336.6" r="3.6" fill="#050505" stroke="#2f8297" stroke-width="1.5"/>
<circle cx="320.3" cy="378.0" r="3.6" fill="#050505" stroke="#2f8297" stroke-width="1.5"/>
<circle cx="385.0" cy="405.5" r="3.6" fill="#050505" stroke="#2f8297" stroke-width="1.5"/>
<circle cx="294.7" cy="453.0" r="3.6" fill="#050505" stroke="#2f8297" stroke-width="1.5"/>
<circle cx="64.8" cy="381.6" r="3.6" fill="#050505" stroke="#2f8297" stroke-width="1.5"/>
<circle cx="45.6" cy="220.0" r="3.6" fill="#050505" stroke="#2f8297" stroke-width="1.5"/>
<circle cx="75.0" cy="315.8" r="3.6" fill="#050505" stroke="#2f8297" stroke-width="1.5"/>
<g font-family="Liberation Sans, sans-serif" font-weight="bold" font-size="8.5" fill="#fff" text-anchor="middle">
<circle cx="39.9" cy="78.5" r="9.7" fill="#257b92"/>
<text x="39.9" y="81.3" font-size="7.7">3</text>
<circle cx="145.0" cy="79.5" r="9.7" fill="#257b92"/>
<text x="145.0" y="82.3" font-size="7.7">5</text>
<circle cx="34.4" cy="132.1" r="9.7" fill="#257b92"/>
<text x="34.4" y="134.9" font-size="7.7">3</text>
<circle cx="294.1" cy="49.8" r="9.7" fill="#257b92"/>
<text x="294.1" y="52.6" font-size="7.7">5</text>
<circle cx="329.2" cy="63.5" r="9.7" fill="#257b92"/>
<text x="329.2" y="66.3" font-size="7.7">2</text>
<circle cx="349.9" cy="104.3" r="9.7" fill="#257b92"/>
<text x="349.9" y="107.1" font-size="7.7">3</text>
<circle cx="218.6" cy="86.7" r="9.7" fill="#257b92"/>
<text x="218.6" y="89.5" font-size="7.7">4</text>
<circle cx="400.8" cy="122.5" r="9.7" fill="#257b92"/>
<text x="400.8" y="125.3" font-size="7.7">2</text>
<circle cx="554.7" cy="34.8" r="9.7" fill="#257b92"/>
<text x="554.7" y="37.6" font-size="7.7">2</text>
<circle cx="498.9" cy="57.1" r="9.7" fill="#257b92"/>
<text x="498.9" y="59.9" font-size="7.7">3</text>
<circle cx="431.3" cy="79.4" r="9.7" fill="#257b92"/>
<text x="431.3" y="82.2" font-size="7.7">9</text>
<circle cx="485.2" cy="92.8" r="9.7" fill="#257b92"/>
<text x="485.2" y="95.6" font-size="7.7">6</text>
<circle cx="534.0" cy="87.4" r="9.7" fill="#257b92"/>
<text x="534.0" y="90.2" font-size="7.7">2</text>
<circle cx="590.7" cy="69.9" r="9.7" fill="#257b92"/>
<text x="590.7" y="72.7" font-size="7.7">3</text>
<circle cx="510.1" cy="143.9" r="12.8" fill="#257b92"/>
<text x="510.1" y="147.1" font-size="9.0">10</text>
<circle cx="597.0" cy="132.0" r="10.0" fill="#257b92"/>
<circle cx="542.6" cy="182.8" r="9.7" fill="#257b92"/>
<text x="542.6" y="185.6" font-size="7.7">4</text>
<circle cx="579.6" cy="214.7" r="9.7" fill="#257b92"/>
<text x="579.6" y="217.5" font-size="7.7">4</text>
<circle cx="522.8" cy="230.6" r="9.7" fill="#257b92"/>
<text x="522.8" y="233.4" font-size="7.7">2</text>
<circle cx="539.4" cy="291.2" r="9.7" fill="#257b92"/>
<text x="539.4" y="294.0" font-size="7.7">4</text>
<circle cx="438.9" cy="292.8" r="9.7" fill="#257b92"/>
<text x="438.9" y="295.6" font-size="7.7">4</text>
<circle cx="412.1" cy="349.7" r="9.7" fill="#257b92"/>
<text x="412.1" y="352.5" font-size="7.7">2</text>
<circle cx="436.0" cy="388.6" r="9.7" fill="#257b92"/>
<text x="436.0" y="391.4" font-size="7.7">2</text>
<circle cx="499.8" cy="402.3" r="12.0" fill="#257b92"/>
<text x="499.8" y="405.5" font-size="9.0">10</text>
<circle cx="545.1" cy="399.1" r="9.7" fill="#257b92"/>
<text x="545.1" y="401.9" font-size="7.7">2</text>
<circle cx="593.0" cy="400.7" r="9.7" fill="#257b92"/>
<text x="593.0" y="403.5" font-size="7.7">2</text>
<circle cx="459.9" cy="452.0" r="9.7" fill="#257b92"/>
<text x="459.9" y="454.8" font-size="7.7">2</text>
<circle cx="420.0" cy="464.9" r="11.8" fill="#257b92"/>
<text x="420.0" y="468.1" font-size="9.0">78</text>
<circle cx="496.0" cy="465.5" r="9.7" fill="#257b92"/>
<text x="496.0" y="468.3" font-size="7.7">4</text>
<circle cx="214.4" cy="398.8" r="9.7" fill="#257b92"/>
<text x="214.4" y="401.6" font-size="7.7">3</text>
<circle cx="349.0" cy="400.4" r="9.7" fill="#257b92"/>
<text x="349.0" y="403.2" font-size="7.7">6</text>
<circle cx="385.1" cy="467.8" r="14.3" fill="#257b92"/>
<text x="385.1" y="471.3" font-size="9.6">106</text>
<circle cx="39.9" cy="325.7" r="9.7" fill="#257b92"/>
<text x="39.9" y="328.5" font-size="7.7">2</text>
<circle cx="161.0" cy="357.6" r="9.7" fill="#257b92"/>
<text x="161.0" y="360.4" font-size="7.7">2</text>
<circle cx="75.0" cy="419.8" r="9.7" fill="#257b92"/>
<text x="75.0" y="422.6" font-size="7.7">2</text>
<circle cx="-2.0" cy="434.8" r="9.7" fill="#257b92"/>
<circle cx="41.5" cy="474.0" r="9.7" fill="#257b92"/>
<circle cx="76.6" cy="269.8" r="9.7" fill="#257b92"/>
<text x="76.6" y="272.6" font-size="7.7">3</text>
<circle cx="120.6" cy="282.6" r="9.7" fill="#257b92"/>
<text x="120.6" y="285.4" font-size="7.7">2</text>
<circle cx="165.2" cy="307.2" r="9.7" fill="#257b92"/>
<text x="165.2" y="310.0" font-size="7.7">2</text>
<circle cx="219.5" cy="302.5" r="9.7" fill="#257b92"/>
<text x="219.5" y="305.3" font-size="7.7">3</text>
<circle cx="282.5" cy="205.1" r="9.7" fill="#257b92"/>
<text x="282.5" y="207.9" font-size="7.7">2</text>
<circle cx="289.5" cy="281.6" r="9.7" fill="#257b92"/>
<text x="289.5" y="284.4" font-size="7.7">2</text>
<circle cx="361.0" cy="312.3" r="9.7" fill="#257b92"/>
<text x="361.0" y="315.1" font-size="7.7">5</text>
</g>
<rect x="526" y="462.4" width="68.8" height="7.6" fill="#c6c6c6"/>
<rect x="526" y="462.4" width="68.8" height="1" fill="#e2e2e2"/>
<rect x="587" y="463" width="1.6" height="7" fill="#555"/>
<text x="528.6" y="469.2" font-family="Liberation Sans, sans-serif" font-size="6.6" fill="#222">200 m</text>
<path d="M549.3,465 V467 Q549.3,468.6 551,468.6 H581 Q582.8,468.6 582.8,467 V465" fill="none" stroke="#333" stroke-width="1"/>
</svg>
<div class="tb" style="top:198.0px;background:#3f8c9f;box-shadow:inset 0 0 0 1px #2f7f93"><svg width="21.3" height="21.3" viewBox="0 0 21.3 21.3"><path d="M10.65,6.6 V14.7 M6.6,10.65 H14.7" stroke="#fff" stroke-width="1.6" fill="none"/></svg></div>
<div class="tb" style="top:223.0px;background:#3f8c9f;box-shadow:inset 0 0 0 1px #2f7f93"><svg width="21.3" height="21.3" viewBox="0 0 21.3 21.3"><path d="M8,11.6 H13.3" stroke="#fff" stroke-width="1.8" fill="none"/></svg></div>
<div class="tb" style="top:248.0px;background:#ffffff;box-shadow:inset 0 0 0 1px #2f7f93"><svg width="21.3" height="21.3" viewBox="0 0 21.3 21.3"><path d="M8,5.2 a1,1 0 0 1 2,0 v4.3 l1.3,-0.4 a0.9,0.9 0 0 1 1.3,0.5 l0.9,-0.2 a0.9,0.9 0 0 1 1.2,0.6 l0.8,-0.1 a0.9,0.9 0 0 1 1.1,0.9 v3.2 c0,2 -1.2,3.4 -3,3.4 h-2.6 c-1.2,0 -2,-0.5 -2.8,-1.5 l-3.3,-4.0 c-0.6,-0.8 0.3,-1.7 1.2,-1.2 l1.9,1.3 z" fill="#16839f"/></svg></div>
<div class="tb" style="top:273.0px;background:#3f8c9f;box-shadow:inset 0 0 0 1px #2f7f93"><svg width="21.3" height="21.3" viewBox="0 0 21.3 21.3"><rect x="5.5" y="5.6" width="10.4" height="10.4" fill="none" stroke="#fff" stroke-width="1.9"/></svg></div>
<div class="tb" style="top:298.0px;background:#3f8c9f;box-shadow:inset 0 0 0 1px #2f7f93"><svg width="21.3" height="21.3" viewBox="0 0 21.3 21.3"><circle cx="10.7" cy="10.8" r="5.2" fill="none" stroke="#fff" stroke-width="1.9"/></svg></div>
<div class="tb" style="top:323.6px;background:#3f8c9f;box-shadow:inset 0 0 0 1px #2f7f93"><svg width="21.3" height="21.3" viewBox="0 0 21.3 21.3"><circle cx="9.2" cy="9.2" r="3.9" fill="none" stroke="#fff" stroke-width="1.7"/><path d="M12.1,12.1 L16.2,16.2" stroke="#fff" stroke-width="2.2" stroke-linecap="round"/></svg></div>
<div id="pop">
<div class="t"><span style="display:inline-block;transform-origin:0 50%;transform:scaleX(0.8670);font-size:12px;font-weight:bold">Debris In Public Right-Of-Way</span></div>
<div class="r" style="top:25.5px"><span style="display:inline-block;transform-origin:0 50%;transform:scaleX(0.9430);font-size:8.4px">Record ID: <u>11018319</u></span></div>
<div class="r" style="top:39px"><span style="display:inline-block;transform-origin:0 50%;transform:scaleX(0.9329);font-size:8.4px">Date Flagged: Oct 18, 2019</span></div>
<div class="r" style="top:52.5px"><span style="display:inline-block;transform-origin:0 50%;transform:scaleX(0.9492);font-size:8.4px">Date Modified: Oct 18, 2019</span></div>
<svg style="position:absolute;left:166.5px;top:2.5px" width="7" height="7" viewBox="0 0 7 7"><path d="M1.2,1.2 L5.8,5.8 M5.8,1.2 L1.2,5.8" stroke="#5a5a5a" stroke-width="1.1" fill="none"/></svg>
</div>
<div id="hdr">
<svg style="position:absolute;left:0;top:0" width="140" height="33" viewBox="0 0 140 33">
<g fill="#fff"><rect x="5.6" y="10" width="21.6" height="2.6" rx="1"/><rect x="5.6" y="15.6" width="21.6" height="2.6" rx="1"/><rect x="5.6" y="21.2" width="21.6" height="2.6" rx="1"/></g>
<g fill="none" stroke="#fff" stroke-width="2" stroke-linejoin="round"><path d="M44.9,14.0 H35.9 Q33.9,14.0 33.9,16.0 V18.5 Q33.9,20.5 35.9,20.5 H44.9"/><path d="M48.2,13 V21.5"/><path d="M48.2,9.8 V11.6"/><path d="M52.6,9.8 V18.5 Q52.6,20.5 54.6,20.5 H61.3"/><path d="M50.8,14.0 H61.3"/><path d="M63.8,13 V18.5 Q63.8,20.5 65.8,20.5 H73.8"/><path d="M73.8,13 V21.5 Q73.8,23.5 71.8,23.5 H64.4"/><path d="M88.1,14.0 H79.6 Q77.6,14.0 77.6,16.0 V18.5 Q77.6,20.5 79.6,20.5 H88.1"/><path d="M88.1,9.8 V21.5"/><path d="M92.7,14.0 H100.5 Q102.5,14.0 102.5,16.0 V21.5"/><path d="M102.5,17.4 H93.5 Q91.9,17.4 91.9,18.9 Q91.9,20.5 93.5,20.5 H102.5"/><path d="M115.9,14.0 H107.6 Q106.0,14.0 106.0,15.7 Q106.0,17.4 107.6,17.4 H113.7 Q115.3,17.4 115.3,18.9 Q115.3,20.5 113.7,20.5 H105.4"/><path d="M118.8,9.8 V21.5"/><path d="M118.8,14.0 H124.1 Q126.1,14.0 126.1,16.0 V21.5"/></g>
</svg>
<div id="brand">SAN LEANDRO</div>
</div>
<div id="side">
<div class="bar" style="top:7px">City: San Leandro</div>
<div class="bar" style="top:33.5px">Dataset: City 311</div>
<div class="btn" style="left:5.8px;width:53.0px">1305 Records</div>
<div class="btn" style="left:62.3px;width:46.6px">Clear Filters</div>
<div class="btn" style="left:112.7px;width:55.5px">Demographics</div>
<div class="btn" style="left:171.5px;width:34.1px">Settings</div>
<div class="lbl" style="top:75px;font-size:9px">Set Filters</div>
<div class="gap" style="top:128px;height:281px"></div>
<div class="lbl" style="top:92.5px">Month Range:</div>
<div class="sel m" style="top:103.2px;width:98.7px"><span class="sx">October 2019</span><i></i></div>
<div class="sel m" style="top:103.2px;left:108px;width:98.7px"><span class="sx">November 2019</span><i></i></div>
<div class="lbl" style="top:134.3px">Department:</div>
<div class="sel" style="top:144.6px"><span class="sx">All</span><i></i></div>
<div class="lbl" style="top:176.3px">Requestor:</div>
<div class="sel" style="top:186.6px"><span class="sx">Any</span><i></i></div>
<div class="lbl" style="top:217.9px">Category:</div>
<div class="sel" style="top:228.2px"><span class="sx">All</span><i></i></div>
<div class="lbl" style="top:260.3px">Keyword Search:</div>
<div class="sel" style="top:270.4px;color:#9a9a9a"><span class="sx">Type keyword to search 311 issues</span></div>
<div class="lbl" style="top:302px">Geographic Area:</div>
<div class="sel" style="top:311.5px"><span class="sx">District (All)</span><i></i></div>
<div class="sel" style="top:342.5px"><span class="sx">Neighborhood (All)</span><i></i></div>
<div class="sel" style="top:373px"><span class="sx">Zipcode (All)</span><i></i></div>
<div style="position:absolute;left:5.5px;top:405px;width:201px;height:4.3px;overflow:hidden"><div class="lbl" style="left:0;top:0.5px">Status:</div></div>
<div style="position:absolute;left:206.8px;top:92.5px;width:6.4px;height:316px;background:linear-gradient(90deg,#f4f4f4,#cfcfcf);border-radius:3px 3px 3px 3px"></div>
<div style="position:absolute;left:172.6px;top:391.9px;width:36.8px;height:36.8px;border-radius:50%;background:linear-gradient(180deg,#41699a,#365d86);box-shadow:0 1px 4px rgba(0,0,0,.45)">
<svg width="36.8" height="36.8" viewBox="0 0 37 37"><rect x="12" y="8.7" width="15.9" height="12.5" rx="3" fill="#e6edf5"/><path d="M11.8,11.1 h11.6 a3,3 0 0 1 3,3 v6.7 a3,3 0 0 1 -3,3 h-4.2 l-1.9,3.2 l-2.3,-3.2 h-3.2 a3,3 0 0 1 -3,-3 v-6.7 a3,3 0 0 1 3,-3 z" fill="#fff" stroke="#3a628c" stroke-width="0.9"/></svg>
</div>
</div>
</body></html>
